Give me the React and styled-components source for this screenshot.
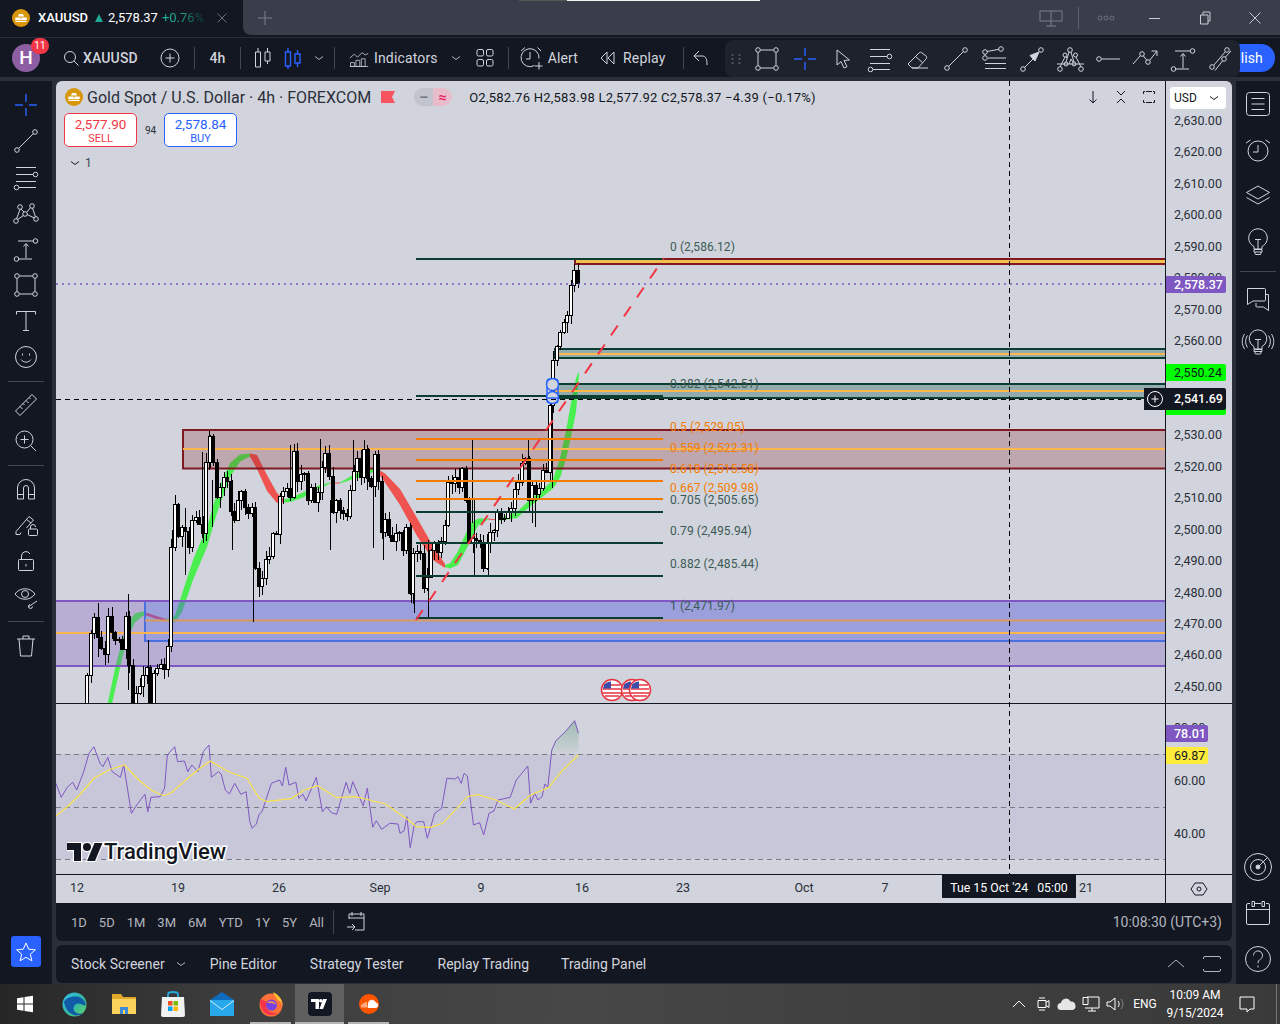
import React from 'react';
import styled, { createGlobalStyle } from 'styled-components';

const GlobalStyle = createGlobalStyle`
  html, body { margin: 0; padding: 0; background: #2a2e39; }
  body { font-family: Roboto, "Liberation Sans", sans-serif; }
  * { box-sizing: border-box; }
`;

/* ---------- chart data, all in page pixels ---------- */

const closes = [
  703, 675, 633, 617, 637, 648, 654, 616, 632, 640, 639, 649, 616, 665, 703,
  693, 686, 675, 667, 703, 673, 668, 664, 669, 646,
  547, 504, 536, 527, 531, 547, 520, 517, 524, 533,
  462, 436, 462, 497, 487, 477, 481, 511, 520, 500,
  491, 507, 513, 507, 568, 586, 578, 559, 556, 533,
  534, 496, 491, 488, 497, 451, 481, 474, 473, 500,
  487, 502, 492, 467, 453, 476, 512, 500,
  510, 513, 516, 490, 471, 458, 477, 449, 478, 486,
  454, 481, 532, 519, 535, 541, 533, 532, 550,
  527, 593, 553, 551, 553, 588, 577, 550, 543, 552,
  541, 525, 482, 483, 477, 487, 468, 500, 543, 538, 540,
  542, 568, 542, 532, 530, 511, 519, 518, 512, 508,
  489, 482, 463, 458, 500, 485, 494, 488, 470, 472,
  405, 360, 346, 332, 322, 315, 285, 270, 283,
];

const candleX = (i) => Math.round(87 + ((i - 1) * (578 - 87)) / (closes.length - 2));

const candles = closes.slice(1).map((close, idx) => {
  const i = idx + 1;
  const open = closes[idx];
  return {
    x: candleX(i),
    top: Math.min(open, close),
    bottom: Math.max(open, close),
    up: close < open,
    high: Math.min(open, close) - ((i * 37) % 9) - 1,
    low: Math.max(open, close) + ((i * 53) % 11) + 1,
  };
});

const longWicks = [
  [98, 603, 657], [128, 594, 690], [148, 640, 703], [172, 530, 600], [185, 508, 575],
  [202, 452, 538], [209, 431, 470], [212, 480, 527], [232, 480, 550], [253, 537, 622],
  [290, 445, 500], [320, 439, 500], [330, 500, 550], [353, 440, 480], [367, 445, 490],
  [373, 480, 548], [383, 520, 560], [411, 525, 603], [414, 560, 613], [428, 540, 617],
  [472, 438, 523], [474, 500, 577], [488, 540, 575], [528, 439, 480], [532, 480, 523],
  [535, 500, 527], [552, 400, 488],
];

const ribbons = [
  { color: '#49ee4f', pts: [[108, 712, 20], [116, 675, 22], [122, 650, 18], [128, 630, 14], [135, 618, 9], [142, 614, 5], [146, 614, 3]] },
  { color: '#e8535f', pts: [[146, 614, 3], [155, 617, 3], [166, 620, 2]] },
  { color: '#49ee4f', pts: [[166, 620, 2], [175, 619, 7], [182, 603, 18], [193, 570, 20], [207, 537, 20], [217, 503, 20], [230, 470, 14], [240, 458, 7], [250, 455, 3]] },
  { color: '#ef5350', pts: [[250, 455, 3], [257, 462, 14], [267, 483, 16], [277, 498, 10], [284, 501, 3]] },
  { color: '#49ee4f', pts: [[284, 501, 3], [290, 500, 4], [303, 495, 5], [317, 488, 4], [330, 483, 1]] },
  { color: '#ef5350', pts: [[330, 483, 1], [340, 483, 1]] },
  { color: '#49ee4f', pts: [[340, 483, 1], [353, 477, 4], [367, 472, 7], [376, 469, 2]] },
  { color: '#ef5350', pts: [[376, 469, 2], [385, 478, 9], [400, 497, 16], [417, 527, 18], [433, 553, 14], [445, 566, 4]] },
  { color: '#49ee4f', pts: [[445, 566, 2], [450, 566, 5], [458, 558, 14], [470, 533, 18], [478, 522, 7], [488, 519, 1]] },
  { color: '#ef5350', pts: [[488, 519, 1], [498, 520, 1]] },
  { color: '#49ee4f', pts: [[498, 520, 2], [517, 515, 6], [530, 503, 7], [543, 493, 7], [553, 484, 9], [560, 468, 20], [566, 445, 28], [571, 420, 34], [576, 395, 34], [579, 373, 3]] },
];

const ribbonShape = (pts) =>
  [...pts.map(([x, y, w]) => `${x},${y - w / 2}`), ...[...pts].reverse().map(([x, y, w]) => `${x},${y + w / 2}`)].join(' ');

const fibLines = [
  [259, '#0b3d33'], [396, '#0b3d33'], [439, '#f57c00'], [460, '#f57c00'], [481, '#f57c00'],
  [499, '#f57c00'], [512, '#0b3d33'], [543, '#0b3d33'], [576, '#0b3d33'], [618, '#0b3d33'],
];

const fibLabels = [
  ['0 (2,586.12)', 251, '#3c5a55'], ['0.382 (2,542.51)', 388, '#3c5a55'], ['0.5 (2,529.05)', 431, '#f57c00'],
  ['0.559 (2,522.31)', 452, '#f57c00'], ['0.618 (2,515.58)', 473, '#f57c00'], ['0.667 (2,509.98)', 492, '#f57c00'],
  ['0.705 (2,505.65)', 504, '#3c5a55'], ['0.79 (2,495.94)', 535, '#3c5a55'], ['0.882 (2,485.44)', 568, '#3c5a55'],
  ['1 (2,471.97)', 610, '#3c5a55'],
];

const rsiRaw = [
  [137, 250], [150, 292], [165, 262], [178, 247], [188, 270], [205, 215], [218, 160], [230, 140], [245, 190], [252, 200],
  [264, 172], [275, 215], [295, 232], [303, 195], [322, 340], [335, 315], [355, 283], [362, 335], [370, 292], [392, 290],
  [403, 265], [410, 165], [428, 140], [435, 185], [452, 183], [460, 215], [470, 195], [485, 215], [498, 155], [512, 135],
  [518, 232], [535, 215], [542, 222], [552, 270], [562, 282], [575, 250], [590, 283], [603, 275], [612, 365], [618, 385],
  [628, 372], [635, 342], [642, 335], [665, 250], [685, 240], [692, 258], [700, 202], [708, 255], [725, 247], [732, 295],
  [742, 283], [750, 303], [775, 232], [790, 335], [800, 320], [812, 338], [825, 343], [848, 247], [857, 280], [864, 245],
  [890, 318], [900, 265], [913, 382], [922, 362], [935, 388], [955, 370], [975, 372], [980, 400], [990, 392], [997, 350],
  [1005, 443], [1015, 375], [1022, 365], [1038, 365], [1047, 415], [1065, 340], [1082, 325], [1095, 235], [1115, 237], [1122, 230],
  [1130, 250], [1137, 220], [1145, 228], [1160, 375], [1175, 368], [1185, 405], [1198, 340], [1210, 333], [1220, 300], [1250, 292],
  [1265, 240], [1293, 198], [1300, 310], [1310, 280], [1318, 300], [1328, 290], [1335, 252], [1342, 262], [1352, 150], [1362, 122],
  [1385, 95], [1408, 62], [1417, 100],
];

const rsiMaRaw = [
  [137, 348], [165, 320], [195, 285], [230, 235], [270, 208], [305, 195], [340, 240], [370, 270], [400, 287], [420, 278],
  [460, 235], [490, 205], [515, 183], [560, 215], [605, 235], [635, 295], [655, 305], [715, 295], [745, 270], [778, 257],
  [825, 293], [870, 290], [895, 297], [945, 312], [1000, 360], [1020, 380], [1055, 382], [1085, 370], [1145, 290], [1170, 284],
  [1215, 300], [1260, 327], [1300, 285], [1345, 262], [1375, 215], [1417, 165],
];

const rsiPoints = (raw) => raw.map(([x, y]) => `${(x / 2.45).toFixed(1)},${(700 + y / 3).toFixed(1)}`).join(' ');

const overbought = [[1352, 150], [1362, 122], [1385, 95], [1408, 62], [1417, 100], [1417, 163], [1352, 163]];

const priceTicks = ['2,630.00', '2,620.00', '2,610.00', '2,600.00', '2,590.00', '2,580.00', '2,570.00', '2,560.00', '2,550.00', '2,540.00', '2,530.00', '2,520.00', '2,510.00', '2,500.00', '2,490.00', '2,480.00', '2,470.00', '2,460.00', '2,450.00'];

const timeLabels = [['12', 77], ['19', 178], ['26', 279], ['Sep', 380], ['9', 481], ['16', 582], ['23', 683], ['Oct', 804], ['7', 885], ['21', 1086]];

/* ---------- layout ---------- */

const Page = styled.div`
  position: relative;
  width: 1280px;
  height: 1024px;
  overflow: hidden;
  display: flex;
  flex-direction: column;
  background: #2a2e39;
  color: #d1d4dc;
`;

const TitleBar = styled.div`
  height: 38px;
  display: flex;
  background: #131722;
  border-bottom: 1px solid #2a2e39;
`;

const Tab = styled.div`
  width: 243px;
  height: 35px;
  display: flex;
  align-items: center;
  padding-left: 12px;
  font-size: 13px;
  color: #fff;
`;

const TabName = styled.span`
  font-weight: 500;
  margin-left: 8px;
`;

const TabUp = styled.span`
  width: 0;
  height: 0;
  margin: 0 5px 0 7px;
  border-left: 4.5px solid transparent;
  border-right: 4.5px solid transparent;
  border-bottom: 8px solid #22ab94;
`;

const TabChange = styled.span`
  margin-left: 4px;
  background: linear-gradient(90deg, #22ab94 40%, #10332f 100%);
  -webkit-background-clip: text;
  background-clip: text;
  color: transparent;
`;

const TabClose = styled.span`
  margin-left: 12px;
  display: flex;
`;

const WindowArea = styled.div`
  flex: 1;
  height: 35px;
  position: relative;
  display: flex;
  align-items: center;
  background: #3a3e4a;
  border-bottom-left-radius: 8px;
`;

const TopStrip = styled.div`
  position: absolute;
  left: 276px;
  top: 0;
  width: 241px;
  height: 1px;
  background: linear-gradient(90deg, #555 0 20%, #f2f2f2 20%);
`;

const WinBtn = styled.div`
  width: ${(p) => p.$w || 50}px;
  height: 35px;
  display: flex;
  align-items: center;
  justify-content: center;
  margin-left: ${(p) => p.$ml || 0}px;
  color: #c8ccd6;
`;

const WinSep = styled.div`
  width: 1px;
  height: 22px;
  margin: 0 3px;
  background: #5d606b;
`;

const Toolbar = styled.div`
  height: 39px;
  display: flex;
  align-items: center;
  padding: 0 5px 0 12px;
  background: #131722;
  font-size: 14px;
  letter-spacing: 0.15px;
  color: #d1d4dc;
`;

const Avatar = styled.div`
  position: relative;
  width: 28px;
  height: 28px;
  margin-right: 23px;
  border-radius: 50%;
  display: flex;
  align-items: center;
  justify-content: center;
  background: #8e5ea2;
  color: #fff;
  font-size: 19px;
  font-weight: 500;
`;

const AvatarBadge = styled.span`
  position: absolute;
  top: -6px;
  right: -9px;
  width: 18px;
  height: 16px;
  border-radius: 8px;
  display: flex;
  align-items: center;
  justify-content: center;
  background: #f23645;
  font-size: 10px;
  font-weight: 400;
`;

const Cell = styled.div`
  flex: none;
  display: flex;
  align-items: center;
  justify-content: ${(p) => (p.$left ? 'flex-start' : 'center')};
  gap: ${(p) => p.$gap || 0}px;
  height: 30px;
  width: ${(p) => (p.$w ? `${p.$w}px` : 'auto')};
  margin-left: ${(p) => p.$ml || 0}px;
  margin-right: ${(p) => p.$mr || 0}px;
  font-weight: ${(p) => p.$weight || 400};
`;

const BarSep = styled.div`
  flex: none;
  width: 1px;
  height: 22px;
  margin-left: ${(p) => p.$ml || 0}px;
  background: #434651;
`;

const Publish = styled.div`
  margin-left: auto;
  width: 96px;
  height: 28px;
  padding-right: 12px;
  border-radius: 14px;
  display: flex;
  align-items: center;
  justify-content: flex-end;
  background: #2962ff;
  color: #fff;
`;

const FloatingBar = styled.div`
  position: absolute;
  left: 725px;
  top: 40px;
  width: 515px;
  height: 37px;
  display: flex;
  align-items: center;
  border-radius: 8px;
  background: #1e222d;
  z-index: 5;
`;

const DragHandle = styled.div`
  width: 23px;
  display: flex;
  justify-content: center;
`;

const FloatBtn = styled.div`
  width: 38px;
  display: flex;
  justify-content: center;
`;

const Band = styled.div`
  height: 4px;
  flex: none;
`;

const Workspace = styled.div`
  height: 903px;
  flex: none;
  display: flex;
  gap: 4px;
`;

const SideBar = styled.div`
  flex: none;
  width: ${(p) => p.$w}px;
  padding-top: ${(p) => p.$pt || 0}px;
  padding-bottom: ${(p) => p.$pb || 0}px;
  display: flex;
  flex-direction: column;
  align-items: center;
  background: #131722;
`;

const SideBtn = styled.div`
  width: 100%;
  height: ${(p) => p.$h || 36}px;
  flex: none;
  display: flex;
  align-items: center;
  justify-content: center;
`;

const SideSep = styled.div`
  width: 36px;
  height: 1px;
  margin: 5.5px 0;
  flex: none;
  background: #434651;
`;

const Spacer = styled.div`
  flex: 1;
`;

const StarBtn = styled.div`
  width: 30px;
  height: 31px;
  border-radius: 3px;
  display: flex;
  align-items: center;
  justify-content: center;
  background: #2962ff;
`;

const Center = styled.div`
  width: 1176px;
  display: flex;
  flex-direction: column;
`;

const Chart = styled.div`
  height: 822px;
  display: grid;
  grid-template-columns: 1110px 66px;
  grid-template-rows: 793px 29px;
  background: #d1d4dc;
  border-radius: 6px 6px 0 0;
  overflow: hidden;
  color: #131722;
  font-size: 12.5px;
`;

const Pane = styled.div`
  position: relative;
  border-right: 1px solid #131722;
`;

const PaneSvg = styled.svg`
  display: block;
  position: absolute;
  left: 0;
  top: 0;
`;

const Legend = styled.div`
  position: absolute;
  left: 9px;
  top: 7px;
  height: 18px;
  display: flex;
  align-items: center;
  font-size: 16px;
  white-space: nowrap;
  color: #2a2e39;
`;

const LegendTitle = styled.span`
  margin-left: 4px;
`;

const LegendFlag = styled.span`
  display: flex;
  margin-left: 10px;
`;

const StatusPills = styled.span`
  display: flex;
  margin-left: 19px;
  height: 18px;
  border-radius: 9px;
  overflow: hidden;
`;

const Pill = styled.span`
  width: 19px;
  display: flex;
  align-items: center;
  justify-content: center;
  background: ${(p) => p.$bg};
  color: ${(p) => p.$color};
  font-size: 14px;
  font-weight: 700;
`;

const Ohlc = styled.span`
  margin-left: 17px;
  font-size: 13px;
  letter-spacing: 0.25px;
  color: #131722;
`;

const LegendTools = styled.div`
  position: absolute;
  top: 5px;
  right: 5px;
  display: flex;
  gap: 6px;
`;

const TradeRow = styled.div`
  position: absolute;
  left: 8px;
  top: 32px;
  display: flex;
  align-items: center;
`;

const TradeBtn = styled.div`
  width: 73px;
  height: 34px;
  display: flex;
  flex-direction: column;
  align-items: center;
  justify-content: center;
  border: 1px solid ${(p) => p.$color};
  border-radius: 5px;
  background: #fff;
  color: ${(p) => p.$color};
  font-size: 13.5px;
  line-height: 16px;
`;

const TradeCaption = styled.span`
  font-size: 11px;
  line-height: 13px;
`;

const Spread = styled.span`
  width: 27px;
  text-align: center;
  font-size: 10px;
  color: #2a2e39;
`;

const Collapse = styled.div`
  position: absolute;
  left: 13px;
  top: 75px;
  display: flex;
  align-items: center;
  gap: 4px;
  font-size: 12px;
  color: #434651;
`;

const Watermark = styled.div`
  position: absolute;
  left: 11px;
  top: 758px;
  display: flex;
  align-items: center;
  gap: 1px;
  font-size: 22px;
  font-weight: 500;
  letter-spacing: -0.05px;
  color: #131722;
  -webkit-text-stroke: 3px #fff;
  paint-order: stroke fill;
`;

const CrossPlus = styled.div`
  position: absolute;
  right: -1px;
  top: 307px;
  width: 22px;
  height: 22px;
  display: flex;
  align-items: center;
  justify-content: center;
  background: #131722;
`;

const AxisColumn = styled.div`
  position: relative;
  font-size: 12.5px;
  color: #2a2e39;
`;

const MainAxis = styled.div`
  height: 623px;
  border-bottom: 1px solid #131722;
  overflow: hidden;
`;

const RsiAxis = styled.div`
  height: 170px;
  overflow: hidden;
`;

const Ticks = styled.div`
  display: flex;
  flex-direction: column;
  padding-top: ${(p) => p.$top}px;
  gap: ${(p) => p.$gap}px;
`;

const Tick = styled.div`
  height: 20px;
  line-height: 20px;
  padding-left: 8px;
`;

const PriceBadge = styled.div`
  position: absolute;
  left: 0;
  top: ${(p) => p.$top}px;
  width: ${(p) => p.$w || 60}px;
  height: ${(p) => p.$h || 17}px;
  line-height: ${(p) => p.$h || 17}px;
  padding-left: 8px;
  border-radius: 0 2px 2px 0;
  background: ${(p) => p.$bg};
  color: ${(p) => p.$color};
  font-weight: ${(p) => p.$weight || 400};
`;

const CurrencySelect = styled.div`
  position: absolute;
  left: 4px;
  top: 6px;
  width: 56px;
  height: 22px;
  padding: 0 6px 0 4px;
  display: flex;
  align-items: center;
  justify-content: space-between;
  border-radius: 3px;
  background: #fff;
  font-size: 12px;
  color: #131722;
`;

const TimeAxis = styled.div`
  position: relative;
  border-top: 1px solid #131722;
  border-right: 1px solid #131722;
`;

const TimeLabel = styled.span`
  position: absolute;
  top: 5px;
  left: ${(p) => p.$x}px;
  transform: translateX(-50%);
  font-size: 12.5px;
  color: #2a2e39;
`;

const TimeCursor = styled.div`
  position: absolute;
  left: 886px;
  top: -1px;
  width: 134px;
  height: 24px;
  padding-top: 4px;
  display: flex;
  align-items: center;
  justify-content: center;
  gap: 9px;
  background: #131722;
  color: #fff;
  font-size: 12.3px;
`;

const AxisCorner = styled.div`
  border-top: 1px solid #131722;
  display: flex;
  justify-content: center;
  padding: 5px 0 0 0;
`;

const DateBar = styled.div`
  height: 38px;
  padding: 0 10px 0 15px;
  display: flex;
  align-items: center;
  background: #131722;
  border-radius: 0 0 6px 6px;
  font-size: 14px;
  color: #b2b5be;
`;

const Ranges = styled.div`
  display: flex;
  gap: 12px;
  font-size: 13px;
`;

const DateSep = styled.div`
  width: 1px;
  height: 24px;
  margin: 0 10px 0 9px;
  background: #434651;
`;

const Clock = styled.div`
  margin-left: auto;
`;

const BottomPanel = styled.div`
  height: 38px;
  margin-top: 4px;
  padding: 0 6px 0 15px;
  display: flex;
  align-items: center;
  background: #131722;
  border-radius: 6px;
  font-size: 14px;
  color: #d1d4dc;
`;

const PanelTab = styled.span`
  margin-right: ${(p) => p.$mr || 0}px;
  white-space: nowrap;
`;

const PanelEnd = styled.div`
  margin-left: auto;
  display: flex;
  gap: 8px;
`;

const Taskbar = styled.div`
  height: 40px;
  flex: none;
  display: flex;
  align-items: stretch;
  background: linear-gradient(90deg, #262626 0%, #3d3d3d 18%, #474747 45%, #3f3f3f 70%, #3a3a3a 100%);
`;

const TaskCell = styled.div`
  position: relative;
  width: ${(p) => p.$w || 49}px;
  flex: none;
  display: flex;
  align-items: center;
  justify-content: center;
  background: ${(p) => (p.$active ? 'rgba(255,255,255,0.17)' : 'transparent')};
  ${(p) =>
    p.$open &&
    `&::after {
      content: '';
      position: absolute;
      left: ${p.$active ? 0 : 4}px;
      right: ${p.$active ? 0 : 4}px;
      bottom: 0;
      height: 2px;
      background: #b5b5b5;
    }`}
`;

const Tray = styled.div`
  margin-left: auto;
  display: flex;
  align-items: stretch;
  color: #fff;
  font-size: 12px;
`;

const TrayCell = styled.div`
  width: ${(p) => p.$w || 24}px;
  display: flex;
  flex-direction: column;
  align-items: center;
  justify-content: center;
  line-height: 18px;
`;

const DesktopEdge = styled.div`
  width: 4px;
  border-left: 1px solid #777;
  margin-left: 9px;
`;

/* ---------- icons ---------- */

const Ico = styled.svg`
  display: block;
  flex: none;
  fill: none;
  stroke: ${(p) => p.$c || '#d1d4dc'};
  stroke-width: ${(p) => p.$sw || 1};
`;

const Icon = ({ size = 28, box = 28, c, sw, children }) => (
  <Ico width={size} height={size} viewBox={`0 0 ${box} ${box}`} $c={c} $sw={sw}>
    {children}
  </Ico>
);

const Dot = ({ x, y, r = 2.3 }) => <circle cx={x} cy={y} r={r} />;

const Chevron = ({ c = '#b2b5be' }) => (
  <Icon size={12} box={12} c={c}>
    <path d="M2 4.5l4 3 4-3" />
  </Icon>
);

const Cross = () => (
  <Icon c="#2962ff" sw={1.4}>
    <path d="M14 3v8M14 17v8M3 14h8M17 14h8" />
  </Icon>
);
const TrendLine = () => (
  <Icon>
    <Dot x={5} y={23} />
    <Dot x={23} y={5} />
    <path d="M6.7 21.3L21.3 6.7" />
  </Icon>
);
const ChannelLines = () => (
  <Icon>
    <path d="M4 4.5h20M4 11.5h17M7 24.5h17M4 18.5h20" />
    <Dot x={23.5} y={11.5} />
    <Dot x={4.5} y={24.5} />
  </Icon>
);
const Xabcd = () => (
  <Icon>
    <Dot x={8} y={8} />
    <Dot x={20} y={7} />
    <Dot x={13} y={15} />
    <Dot x={4} y={22} />
    <Dot x={24} y={20} />
    <path d="M9 10l3 3M15 13l3.5-4.5M20.5 9l3 9M11.5 16.5L5.5 20.5M15 15.5l7.5 3.5M8 10.5L4.5 20" />
  </Icon>
);
const Measure = () => (
  <Icon>
    <path d="M6 6h15M6 24h14M14 23V9M11.5 11.5L14 8.5l2.5 3" />
    <Dot x={23.5} y={6} />
    <Dot x={4.5} y={24} />
  </Icon>
);
const RectTool = () => (
  <Icon>
    <Dot x={5} y={5} />
    <Dot x={23} y={5} />
    <Dot x={5} y={23} />
    <Dot x={23} y={23} />
    <path d="M7.5 5h13M7.5 23h13M5 7.5v13M23 7.5v13" />
  </Icon>
);
const TextTool = () => (
  <Icon>
    <path d="M4.5 4.5h19M14 4.5v19M11 23.5h6M4.5 4.5v3M23.5 4.5v3" />
  </Icon>
);
const Smile = () => (
  <Icon>
    <circle cx={14} cy={14} r={10.5} />
    <path d="M9 16.5c2.5 3.5 7.5 3.5 10 0M10.5 10.5v2M17.5 10.5v2" />
  </Icon>
);
const Ruler = () => (
  <Icon>
    <path d="M3.5 20L20 3.5 24.5 8 8 24.5zM8 15.5l2.5 2.5M11 12.5l1.5 1.5M14 9.5l2.5 2.5M17 6.5l1.5 1.5" />
  </Icon>
);
const ZoomIn = () => (
  <Icon>
    <circle cx={12.5} cy={12.5} r={8.5} />
    <path d="M18.5 18.5l5.5 5.5M12.5 8.5v8M8.5 12.5h8" />
  </Icon>
);
const Magnet = () => (
  <Icon>
    <path d="M5.5 24V13a8.5 8.5 0 0 1 17 0v11h-6V13a2.5 2.5 0 0 0-5 0v11zM5.5 19.5h6M16.5 19.5h6" />
  </Icon>
);
const PencilLock = () => (
  <Icon>
    <path d="M4 20.5L17 5.5l4.5 3.5-7 8M9 21.5l-1 2H4v-3M14.5 8.5l4.5 3.5" />
    <rect x={16.5} y={18} width={9} height={6.5} rx={1} />
    <path d="M18.5 18v-2a2.5 2.5 0 0 1 5 0" />
  </Icon>
);
const Unlock = () => (
  <Icon>
    <rect x={6.5} y={12.5} width={15} height={11} rx={1} />
    <path d="M9.5 12.5V9a4.5 4.5 0 0 1 8.5-2M14 17v2.5" />
  </Icon>
);
const EyeTool = () => (
  <Icon>
    <path d="M3 11c5-7 15-7 20 0-5 7-15 7-20 0z" />
    <circle cx={13} cy={11} r={3.5} />
    <path d="M16 24l9-6M18 21.5a2 2 0 1 0 2.5 2" />
  </Icon>
);
const Trash = () => (
  <Icon>
    <path d="M5 8h18M11 8V5h6v3M7 8l1.5 17h11L21 8" />
  </Icon>
);
const Star = () => (
  <Icon size={24} box={24} c="#fff">
    <path d="M12 3l2.7 6.2 6.7.6-5.1 4.4 1.6 6.6L12 17.3l-5.900 3.500 1.600-6.600-5.100-4.400 6.700-.6z" />
  </Icon>
);
const Cursor = () => (
  <Icon>
    <path d="M8 5v15l4-3.5 3 6.5 3-1.300-3-6.200 5.500-.5z" />
  </Icon>
);
const Eraser = () => (
  <Icon>
    <path d="M4 19l11-11c1-1 2-1 3 0l4 3c1 1 1 2 0 3L14 23H8zM11.5 11.5l7 6M8 23h16" />
  </Icon>
);
const FibFan = () => (
  <Icon>
    <Dot x={5} y={7} />
    <Dot x={5} y={13} />
    <Dot x={21} y={4} />
    <path d="M7 6.5l12-2.2M8 13h18M5 18.5h21M5 23.5h21M5 9.5v1" />
  </Icon>
);
const ArrowTool = () => (
  <Icon>
    <Dot x={5} y={24} />
    <Dot x={23} y={5} />
    <path d="M6.5 22.5L17 12" />
    <path d="M21 7l-9 3.5 5 5.5z" fill="#d1d4dc" />
  </Icon>
);
const Pitchfork = () => (
  <Icon>
    <Dot x={4} y={24} />
    <Dot x={25} y={24} />
    <Dot x={14} y={5} />
    <Dot x={9} y={10} r={2} />
    <Dot x={19.5} y={10} r={2} />
    <Dot x={10} y={19} r={2} />
    <Dot x={18} y={19} r={2} />
    <path d="M1 19h27M4 22l5-10M25 22l-5-10M13 7l-3 10M15 7l3 10M11 12l-1 1M13 19l2-5 2 3" />
  </Icon>
);
const HLine = () => (
  <Icon>
    <Dot x={5} y={14} />
    <path d="M7.5 14H26" />
  </Icon>
);
const PolyArrow = () => (
  <Icon>
    <Dot x={11} y={9} />
    <Dot x={17} y={17} />
    <path d="M2 19l7.5-8.5M12.5 11l3.5 4.5M18.5 15.5L26 6M20.5 6H26v5" />
  </Icon>
);
const Parallel = () => (
  <Icon>
    <Dot x={5} y={22} />
    <Dot x={20} y={5} />
    <Dot x={17} y={14} />
    <path d="M6.7 20.3L18.3 6.7M8 25.5l7.5-9.5M18.5 12l5.5-6" />
  </Icon>
);
const MenuList = () => (
  <Icon>
    <rect x={2.5} y={2.5} width={23} height={23} rx={3} />
    <path d="M7.5 8.5h13M7.5 14h13M7.5 19.5h13" />
  </Icon>
);
const AlarmClock = () => (
  <Icon>
    <circle cx={14} cy={15} r={10} />
    <path d="M14 9v7h-5M2 7l4.5-3M26 7l-4.5-3" />
  </Icon>
);
const Layers = () => (
  <Icon>
    <path d="M14 4l11.5 6.5L14 17 2.5 10.5zM2.5 15.5L14 22l11.5-6.500" />
  </Icon>
);
const Bulb = () => (
  <Icon>
    <path d="M10 21v-2.5a9.3 9.3 0 1 1 8 0V21zM10 21.5h8V24h-8zM11 24v1.500a1 1 0 0 0 1 1h4a1 1 0 0 0 1-1V24M11 11.5h6M14 11.5V21" />
  </Icon>
);
const Chat = () => (
  <Icon>
    <path d="M3.5 3.5h17a1 1 0 0 1 1 1V15a1 1 0 0 1-1 1H9l-5.500 3.500zM21.500 9.500h3v16l-5-3.500h-7a1 1 0 0 1-.5-1V18" />
  </Icon>
);
const BulbWaves = () => (
  <Icon size={34} box={34}>
    <path d="M13 23v-2.500a8.800 8.800 0 1 1 8 0V23zM13 23.500h8v2h-8zM14 25.500V27a1 1 0 0 0 1 1h4a1 1 0 0 0 1-1v-1.500M14 13.500h6M17 13.500V23M6.500 9.500c-2.500 4-2.500 8 0 12M3.500 8c-3 5-3 10 0 15M27.500 9.500c2.500 4 2.500 8 0 12M30.500 8c3 5 3 10 0 15" />
  </Icon>
);
const Radar = () => (
  <Icon>
    <circle cx={14} cy={14} r={13.5} />
    <circle cx={14} cy={14} r={7.5} />
    <circle cx={14} cy={14} r={2} fill="#d1d4dc" />
    <path d="M14 14L23.5 4.5" />
  </Icon>
);
const Calendar = () => (
  <Icon>
    <path d="M6 4.5H4A1.500 1.500 0 0 0 2.500 6v18A1.500 1.500 0 0 0 4 25.500h20a1.500 1.500 0 0 0 1.500-1.500V6A1.500 1.500 0 0 0 24 4.500h-2M11 4.500h6M2.500 10.500h23M8 2.500h2.500v5H8zM18 2.500h2.500v5H18z" />
  </Icon>
);
const Help = () => (
  <Icon>
    <circle cx={14} cy={14} r={12.5} />
    <path d="M9.5 10.5a4.500 4.500 0 1 1 7 3.700c-1.500 1-2.500 1.800-2.500 4M14 20.500v2" />
  </Icon>
);

const GoldIcon = ({ size = 18 }) => (
  <svg width={size} height={size} viewBox="0 0 18 18">
    <circle cx={9} cy={9} r={9} fill="#d8960a" />
    <path d="M7 5h4l1 2.5H6zM3.5 8.5h5l.5 2.5H3zM9.5 8.5h5l.5 2.5H9zM3.5 11.8h11V13h-11z" fill="#fff" />
  </svg>
);

const TvMark = () => (
  <svg width={36} height={20} viewBox="0 0 36 18">
    <g fill="#131722" stroke="#fff" strokeWidth={2.4} paintOrder="stroke fill">
      <path d="M14 18H7V7H0V0h14z" />
      <circle cx={20} cy={4} r={4} />
      <path d="M28 18h-8L27.5 0h8z" />
    </g>
  </svg>
);

/* ---------- chart drawing ---------- */

const FlagBall = ({ x, y }) => (
  <g>
    <circle cx={x} cy={y} r={10.5} fill="#fff" stroke="#e5343f" strokeWidth={1.5} />
    <path d={`M${x - 8} ${y - 5}h16M${x - 9} ${y - 1}h18M${x - 9} ${y + 3}h18M${x - 7} ${y + 6}h14`} stroke="#e5343f" strokeWidth={1.5} />
    <path d={`M${x - 8} ${y - 5}a9 9 0 0 1 7-3.5v7h-8z`} fill="#3b4da8" />
  </g>
);

const ChartDrawing = () => (
  <PaneSvg width={1109} height={793} viewBox="56 81 1109 793">
    <defs>
      <clipPath id="mainClip">
        <rect x={56} y={81} width={1109} height={622} />
      </clipPath>
      <linearGradient id="overFill" x1="0" y1="0" x2="0" y2="1">
        <stop offset="0" stopColor="#5f9e7a" stopOpacity="0.45" />
        <stop offset="1" stopColor="#5f9e7a" stopOpacity="0.03" />
      </linearGradient>
    </defs>

    <g clipPath="url(#mainClip)">
      {ribbons.map((r, i) => (
        <polygon key={i} points={ribbonShape(r.pts)} fill={r.color} />
      ))}

      {/* supply and demand zones */}
      <rect x={183} y={430} width={990} height={38.5} fill="rgba(128,25,34,0.24)" stroke="#801922" strokeWidth={2} />
      <line x1={183} y1={449} x2={1165} y2={449} stroke="#ffb74d" strokeWidth={2} />

      <rect x={56} y={601} width={1109} height={65} fill="rgba(126,87,194,0.3)" />
      <rect x={145} y={601} width={1030} height={40} fill="rgba(41,98,255,0.2)" stroke="#4c6fe0" strokeWidth={2} />
      <path d="M56 601h1109M56 666h1109" stroke="#7e57c2" strokeWidth={2} />
      <path d="M145 620.5h1020" stroke="#d99a5f" strokeWidth={2} />
      <path d="M56 633h1109" stroke="#ffb74d" strokeWidth={2} />

      <rect x={575} y={259} width={600} height={5} fill="#f2c14d" stroke="#801922" strokeWidth={2} />
      <rect x={555} y={349} width={620} height={9} fill="rgba(0,77,64,0.3)" stroke="#0b3d33" strokeWidth={2} />
      <path d="M556 354h609" stroke="#ffb74d" strokeWidth={2} />
      <rect x={553} y={384} width={620} height={14} fill="rgba(0,77,64,0.3)" stroke="#0b3d33" strokeWidth={2} />
      <path d="M554 391h611" stroke="#ffb74d" strokeWidth={2} />

      <g shapeRendering="crispEdges" stroke="#000" strokeWidth={1}>
        {longWicks.map(([x, a, b], i) => (
          <line key={i} x1={x + 0.5} y1={a} x2={x + 0.5} y2={b} />
        ))}
        {candles.map((c, i) => (
          <g key={i}>
            <line x1={c.x + 0.5} y1={c.high} x2={c.x + 0.5} y2={c.low} />
            <rect x={c.x - 1.5} y={c.top} width={3} height={Math.max(c.bottom - c.top, 1)} fill={c.up ? '#fff' : '#000'} />
          </g>
        ))}
      </g>

      {/* fib retracement */}
      {fibLines.map(([y, color]) => (
        <line key={y} x1={416} y1={y} x2={663} y2={y} stroke={color} strokeWidth={2} />
      ))}
      <line x1={416} y1={620} x2={664} y2={258} stroke="#f23645" strokeWidth={2} strokeDasharray="12 11" />
      <g fontFamily="Roboto, sans-serif" fontSize="12" letterSpacing="0.08">
        {fibLabels.map(([text, y, color]) => (
          <text key={text} x={670} y={y} fill={color}>{text}</text>
        ))}
      </g>

      <g fill="#d1d4dc" stroke="#2962ff" strokeWidth={1.5}>
        <rect x={547} y={379} width={11} height={24} rx={3} fill="none" />
        <circle cx={552.5} cy={384.5} r={6} />
        <circle cx={552.5} cy={397.5} r={6} />
      </g>
      <path d="M547 398h11" stroke="#2962ff" strokeWidth={1.5} />

      <FlagBall x={612} y={690} />
      <FlagBall x={632} y={690} />
      <FlagBall x={640} y={690} />
    </g>

    {/* price and crosshair lines */}
    <path d="M56 284h1109" stroke="#7e57c2" strokeWidth={1.5} strokeDasharray="2 4" />
    <path d="M56 399.5h1089" stroke="#000" strokeWidth={1} strokeDasharray="5 4" />

    <path d="M56 703.5h1109" stroke="#131722" strokeWidth={1} />

    {/* rsi pane */}
    <rect x={56} y={754} width={1109} height={105} fill="rgba(126,87,194,0.1)" />
    <path d="M56 754.5h1109M56 807.5h1109M56 859.5h1109" stroke="#787b86" strokeWidth={1} strokeDasharray="5 4" />
    <polygon points={rsiPoints(overbought)} fill="url(#overFill)" />
    <polyline points={rsiPoints(rsiRaw)} fill="none" stroke="#7e57c2" strokeWidth={1} />
    <polyline points={rsiPoints(rsiMaRaw)} fill="none" stroke="#fbe34a" strokeWidth={1.2} />

    <path d="M1009.5 81v793" stroke="#000" strokeWidth={1} strokeDasharray="5 4" />
  </PaneSvg>
);

/* ---------- taskbar art ---------- */

const WinLogo = () => (
  <svg width={18} height={18} viewBox="0 0 18 18">
    <path d="M1 3.2l6.5-1v6.3H1zM8.5 2L17 .7v7.8H8.5zM1 9.5h6.5v6.3l-6.5-1zM8.5 9.5H17v7.800L8.500 16z" fill="#fff" />
  </svg>
);

const EdgeLogo = () => (
  <svg width={25} height={25} viewBox="0 0 25 25">
    <defs>
      <linearGradient id="edgeA" x1="0" y1="0" x2="1" y2="1">
        <stop offset="0" stopColor="#35c1f1" />
        <stop offset="0.5" stopColor="#2fb6a6" />
        <stop offset="1" stopColor="#66d46a" />
      </linearGradient>
    </defs>
    <circle cx={12.5} cy={12.5} r={12} fill="url(#edgeA)" />
    <path d="M2 10c2 10 9 15 16 13 1-.3 3-1.5 3-2-5 2-9-1-9.5-4-.4-3 2-5.5 5-5.5 3.5 0 5 2.5 7 2 1-3-3-9-10-9C7 4.500 3 7 2 10z" fill="#105aa8" />
  </svg>
);

const FolderLogo = () => (
  <svg width={24} height={22} viewBox="0 0 24 22">
    <path d="M0 1h9l2 3h13v16H0z" fill="#e0a92a" />
    <path d="M0 6h24v15H0z" fill="#fbd35c" />
    <path d="M8 14h8v7h-3v-4h-2v4H8z" fill="#3c8ad6" />
  </svg>
);

const StoreLogo = () => (
  <svg width={24} height={26} viewBox="0 0 24 26">
    <path d="M7 7V3.5C7 1 9 1 12 1s5 0 5 2.5V7" fill="none" stroke="#2aa8e0" strokeWidth={1.8} />
    <path d="M1 6h22l1 18a2 2 0 0 1-2 2H2a2 2 0 0 1-2-2z" fill="#f1f1f1" />
    <path d="M7 10h4.5v4.5H7z" fill="#f25022" />
    <path d="M12.5 10H17v4.5h-4.5z" fill="#7fba00" />
    <path d="M7 15.5h4.5V20H7z" fill="#00a4ef" />
    <path d="M12.5 15.5H17V20h-4.5z" fill="#ffb900" />
  </svg>
);

const MailLogo = () => (
  <svg width={24} height={24} viewBox="0 0 24 24">
    <path d="M0 8L12 0l12 8v16H0z" fill="#0f6cbd" />
    <path d="M0 8h24v16H0z" fill="#28a8ea" />
    <path d="M0 8l12 9 12-9v1L12 18 0 9z" fill="#d6f0fb" />
  </svg>
);

const FirefoxLogo = () => (
  <svg width={24} height={26} viewBox="0 0 24 26">
    <circle cx={12} cy={14} r={11.5} fill="#ff7139" />
    <path d="M14 1c6 3 10 8 9.5 14-1-4-3-5-5-6-1-3-4-5-4.5-8z" fill="#ffbd2e" />
    <path d="M1 8c0 6 1 10 5 14 3 2.5 9 3 13 0-4 1-8 0-11-4-2-3 0-5 2-6-4-2-7-3-9-4z" fill="#f5344b" />
    <circle cx={12.5} cy={14} r={5.5} fill="#7542e5" />
    <path d="M8 12c3-3 8-2 9.5 2-3-2-5-2-9.5-2z" fill="#ff9640" />
  </svg>
);

const TvTile = () => (
  <svg width={24} height={24} viewBox="0 0 24 24">
    <rect width={24} height={24} rx={4} fill="#131722" />
    <path d="M3 7h8v10H7.5V10H3zM15 17h-3.5L15 7h4z" fill="#fff" />
    <circle cx={12.8} cy={8.8} r={1.8} fill="#fff" />
  </svg>
);

const CloudTile = () => (
  <svg width={20} height={20} viewBox="0 0 20 20">
    <circle cx={10} cy={10} r={10} fill="#ff5500" />
    <path d="M3 13.5v-3M5 13.5V9M7 13.5V8M9 13.5h7.5a2 2 0 0 0 0-4.500c-.5-3-4.500-3.500-6.500-1.500z" stroke="#fff" strokeWidth={1} fill="#fff" />
  </svg>
);

const TrayIcon = ({ children }) => (
  <Ico width={20} height={20} viewBox="0 0 20 20" $c="#fff">
    {children}
  </Ico>
);

/* ---------- page ---------- */

const App = () => (
  <Page>
    <GlobalStyle />

    <TitleBar>
      <Tab>
        <GoldIcon />
        <TabName>XAUUSD</TabName>
        <TabUp />
        <span>2,578.37</span>
        <TabChange>+0.76%</TabChange>
        <TabClose>
          <Icon size={12} box={12} c="#6a6d78"><path d="M1.5 1.5l9 9M10.5 1.5l-9 9" /></Icon>
        </TabClose>
      </Tab>
      <WindowArea>
        <TopStrip />
        <WinBtn $w={44}>
          <Icon size={16} box={16} c="#7d808b"><path d="M8 1v14M1 8h14" /></Icon>
        </WinBtn>
        <WinBtn $w={24} $ml={752}>
          <Icon size={24} box={24} c="#7d808b"><path d="M1 5h22v10H1zM12 5v15M7 20h10" /></Icon>
        </WinBtn>
        <WinBtn $w={12} />
        <WinSep />
        <WinBtn $w={48}>
          <Icon size={20} box={20} c="#6f727d">
            <circle cx={4} cy={10} r={2} />
            <circle cx={10} cy={10} r={2} />
            <circle cx={16} cy={10} r={2} />
          </Icon>
        </WinBtn>
        <WinBtn>
          <Icon size={12} box={12} c="#c8ccd6"><path d="M0 6.5h11" /></Icon>
        </WinBtn>
        <WinBtn>
          <Icon size={14} box={14} c="#c8ccd6"><path d="M2.5 4H10v9H2.5zM5 4V1h7v9h-2" /></Icon>
        </WinBtn>
        <WinBtn>
          <Icon size={14} box={14} c="#c8ccd6"><path d="M1.5 1.5l11 11M12.5 1.5l-11 11" /></Icon>
        </WinBtn>
      </WindowArea>
    </TitleBar>

    <Toolbar>
      <Avatar>
        H
        <AvatarBadge>11</AvatarBadge>
      </Avatar>
      <Cell $w={92} $left $gap={4} $weight={500}>
        <Icon size={16} box={16}><circle cx={7} cy={7} r={5.5} /><path d="M11 11l4.5 4.5" /></Icon>
        XAUUSD
      </Cell>
      <Cell $w={30}>
        <Icon size={20} box={20}><circle cx={10} cy={10} r={9} /><path d="M10 5.5v9M5.5 10h9" /></Icon>
      </Cell>
      <BarSep $ml={9} />
      <Cell $w={45} $weight={500}>4h</Cell>
      <BarSep />
      <Cell $w={36} $ml={3}>
        <Icon size={22} box={22}><path d="M4.5 5h5v15h-5zM7 5V1M14 5h5v9h-5zM16.5 5V1M16.5 14v3" /></Icon>
      </Cell>
      <Cell $w={24}>
        <Icon size={22} box={22} c="#2962ff" sw={1.4}><path d="M4.5 5h5v14h-5zM7 5V1M7 19v3M14 7h5v9h-5zM16.5 7V3M16.5 16v4" /></Icon>
      </Cell>
      <Cell $w={30}><Chevron /></Cell>
      <BarSep />
      <Cell $ml={14} $gap={5}>
        <Icon size={20} box={26}><path d="M1 13l6-5 4 4 6-6 4 3 4-2M2 24v-5h5v5zM9 24v-8h5v8zM16 24V14h5v10zM1 24h24" /></Icon>
        Indicators
      </Cell>
      <Cell $w={24} $ml={6}><Chevron /></Cell>
      <Cell $w={34}>
        <Icon size={20} box={20}>
          <rect x={2} y={1.5} width={6.5} height={6.5} rx={1.5} />
          <rect x={11.5} y={1.5} width={6.5} height={6.5} rx={1.5} />
          <rect x={2} y={11.5} width={6.5} height={6.5} rx={1.5} />
          <rect x={11.5} y={11.5} width={6.5} height={6.5} rx={1.5} />
        </Icon>
      </Cell>
      <BarSep $ml={6} />
      <Cell $ml={11} $gap={4}>
        <Icon size={24} box={24}><path d="M14.5 19.5a9 9 0 1 1 4.5-7M10 6v7H6M1 5l4-3.5M21 5l-3.5-3.5M19 16v7.5M15 20h7.5" /></Icon>
        Alert
      </Cell>
      <Cell $ml={20} $gap={5}>
        <Icon size={20} box={20}><path d="M9 4L3 10l6 6zM16 4l-6 6 6 6z" /></Icon>
        Replay
      </Cell>
      <BarSep $ml={18} />
      <Cell $w={28} $ml={3}>
        <Icon size={20} box={20}><path d="M8 3L3 8l5 5M3 8h8c4 0 5 3 5 9" /></Icon>
      </Cell>
      <Publish>lish</Publish>
    </Toolbar>

    <FloatingBar>
      <DragHandle>
        <Icon size={12} box={12} c="#50535e" sw={2}>
          <path d="M2.5 1v2M2.5 5v2M2.5 9v2M9.5 1v2M9.5 5v2M9.5 9v2" />
        </Icon>
      </DragHandle>
      <FloatBtn><RectTool /></FloatBtn>
      <FloatBtn><Cross /></FloatBtn>
      <FloatBtn><Cursor /></FloatBtn>
      <FloatBtn><ChannelLines /></FloatBtn>
      <FloatBtn><Eraser /></FloatBtn>
      <FloatBtn><TrendLine /></FloatBtn>
      <FloatBtn><FibFan /></FloatBtn>
      <FloatBtn><ArrowTool /></FloatBtn>
      <FloatBtn><Pitchfork /></FloatBtn>
      <FloatBtn><HLine /></FloatBtn>
      <FloatBtn><PolyArrow /></FloatBtn>
      <FloatBtn><Measure /></FloatBtn>
      <FloatBtn><Parallel /></FloatBtn>
    </FloatingBar>

    <Band />

    <Workspace>
      <SideBar $w={52} $pt={6} $pb={17}>
        <SideBtn><Cross /></SideBtn>
        <SideBtn><TrendLine /></SideBtn>
        <SideBtn><ChannelLines /></SideBtn>
        <SideBtn><Xabcd /></SideBtn>
        <SideBtn><Measure /></SideBtn>
        <SideBtn><RectTool /></SideBtn>
        <SideBtn><TextTool /></SideBtn>
        <SideBtn><Smile /></SideBtn>
        <SideSep />
        <SideBtn><Ruler /></SideBtn>
        <SideBtn><ZoomIn /></SideBtn>
        <SideSep />
        <SideBtn><Magnet /></SideBtn>
        <SideBtn><PencilLock /></SideBtn>
        <SideBtn><Unlock /></SideBtn>
        <SideBtn><EyeTool /></SideBtn>
        <SideSep />
        <SideBtn><Trash /></SideBtn>
        <Spacer />
        <StarBtn><Star /></StarBtn>
      </SideBar>

      <Center>
        <Chart>
          <Pane>
            <ChartDrawing />
            <Legend>
              <GoldIcon />
              <LegendTitle>Gold Spot / U.S. Dollar · 4h · FOREXCOM</LegendTitle>
              <LegendFlag>
                <svg width={14} height={12} viewBox="0 0 14 12"><path d="M0 0h14l-3 6 3 6H0z" fill="#f7525f" /></svg>
              </LegendFlag>
              <StatusPills>
                <Pill $bg="#c1c4cd" $color="#787b86">–</Pill>
                <Pill $bg="#e8bccb" $color="#e91e63">≈</Pill>
              </StatusPills>
              <Ohlc>O2,582.76 H2,583.98 L2,577.92 C2,578.37 −4.39 (−0.17%)</Ohlc>
            </Legend>
            <LegendTools>
              <Icon size={22} box={22} c="#131722"><path d="M11 5v12M7.5 13.5L11 17l3.5-3.5" /></Icon>
              <Icon size={22} box={22} c="#131722"><path d="M7 5l4 4 4-4M7 17l4-4 4 4" /></Icon>
              <Icon size={22} box={22} c="#131722"><path d="M7 5.5H5.5V8M15 5.5h1.5V8M7 16.5H5.5V14M15 16.5h1.5V14M8 5.5h6M8 16.5h6" /></Icon>
            </LegendTools>
            <TradeRow>
              <TradeBtn $color="#f23645">
                2,577.90
                <TradeCaption>SELL</TradeCaption>
              </TradeBtn>
              <Spread>94</Spread>
              <TradeBtn $color="#2962ff">
                2,578.84
                <TradeCaption>BUY</TradeCaption>
              </TradeBtn>
            </TradeRow>
            <Collapse>
              <Chevron c="#131722" />
              1
            </Collapse>
            <Watermark>
              <TvMark />
              TradingView
            </Watermark>
            <CrossPlus>
              <Icon size={18} box={18} c="#fff"><circle cx={9} cy={9} r={7.5} /><path d="M9 5.5v7M5.5 9h7" /></Icon>
            </CrossPlus>
          </Pane>

          <AxisColumn>
            <MainAxis>
              <Ticks $top={30} $gap={11.44}>
                {priceTicks.map((t) => <Tick key={t}>{t}</Tick>)}
              </Ticks>
            </MainAxis>
            <RsiAxis>
              <Ticks $top={14} $gap={33}>
                <Tick>80.00</Tick>
                <Tick>60.00</Tick>
                <Tick>40.00</Tick>
              </Ticks>
            </RsiAxis>
            <CurrencySelect>
              USD
              <Chevron c="#131722" />
            </CurrencySelect>
            <PriceBadge $top={195} $bg="#7e57c2" $color="#fff" $weight={500}>2,578.37</PriceBadge>
            <PriceBadge $top={283} $bg="#00ff00" $color="#131722">2,550.24</PriceBadge>
            <PriceBadge $top={317} $bg="#00ff00" $color="#131722" />
            <PriceBadge $top={307} $h={22} $bg="#131722" $color="#fff" $weight={500}>2,541.69</PriceBadge>
            <PriceBadge $top={644} $w={42} $bg="#7e57c2" $color="#fff" $weight={500}>78.01</PriceBadge>
            <PriceBadge $top={666} $w={42} $bg="#ffeb3b" $color="#131722">69.87</PriceBadge>
          </AxisColumn>

          <TimeAxis>
            {timeLabels.map(([t, x]) => <TimeLabel key={t} $x={x - 56}>{t}</TimeLabel>)}
            <TimeCursor>
              <span>Tue 15 Oct '24</span>
              <span>05:00</span>
            </TimeCursor>
          </TimeAxis>
          <AxisCorner>
            <Icon size={18} box={18} c="#131722"><path d="M5 3h8l4 6-4 6H5L1 9z" /><circle cx={9} cy={9} r={2} /></Icon>
          </AxisCorner>
        </Chart>

        <DateBar>
          <Ranges>
            {['1D', '5D', '1M', '3M', '6M', 'YTD', '1Y', '5Y', 'All'].map((r) => <span key={r}>{r}</span>)}
          </Ranges>
          <DateSep />
          <Icon size={24} box={24}><path d="M5 9V4h15v16H11M5 8h15M8 2v4M17 2v4M3 17h8M8 14l3 3-3 3" /></Icon>
          <Clock>10:08:30 (UTC+3)</Clock>
        </DateBar>

        <BottomPanel>
          <PanelTab $mr={10}>Stock Screener</PanelTab>
          <Cell $w={12} $mr={23}><Chevron /></Cell>
          <PanelTab $mr={33}>Pine Editor</PanelTab>
          <PanelTab $mr={34}>Strategy Tester</PanelTab>
          <PanelTab $mr={32}>Replay Trading</PanelTab>
          <PanelTab>Trading Panel</PanelTab>
          <PanelEnd>
            <Icon size={28} box={28} c="#b2b5be"><path d="M6 17l8-7 8 7" /></Icon>
            <Icon size={28} box={28} c="#b2b5be"><path d="M8 6.5H7A1.5 1.5 0 0 0 5.5 8v1M20 6.5h1A1.5 1.5 0 0 1 22.5 8v1M8 21.5H7A1.5 1.5 0 0 1 5.5 20v-1M20 21.5h1a1.5 1.5 0 0 0 1.5-1.5v-1M8 6.5h12M8 21.5h12" /></Icon>
          </PanelEnd>
        </BottomPanel>
      </Center>

      <SideBar $w={44} $pb={2}>
        <SideBtn $h={46}><MenuList /></SideBtn>
        <SideBtn $h={46}><AlarmClock /></SideBtn>
        <SideBtn $h={46}><Layers /></SideBtn>
        <SideBtn $h={46}><Bulb /></SideBtn>
        <SideSep />
        <SideBtn $h={44}><Chat /></SideBtn>
        <SideBtn $h={44}><BulbWaves /></SideBtn>
        <Spacer />
        <SideBtn $h={46}><Radar /></SideBtn>
        <SideBtn $h={46}><Calendar /></SideBtn>
        <SideBtn $h={46}><Help /></SideBtn>
      </SideBar>
    </Workspace>

    <Spacer />

    <Taskbar>
      <TaskCell $w={50}><WinLogo /></TaskCell>
      <TaskCell><EdgeLogo /></TaskCell>
      <TaskCell><FolderLogo /></TaskCell>
      <TaskCell><StoreLogo /></TaskCell>
      <TaskCell><MailLogo /></TaskCell>
      <TaskCell $open><FirefoxLogo /></TaskCell>
      <TaskCell $open $active><TvTile /></TaskCell>
      <TaskCell $open><CloudTile /></TaskCell>
      <Tray>
        <TrayCell>
          <TrayIcon><path d="M4 13l6-6 6 6" /></TrayIcon>
        </TrayCell>
        <TrayCell>
          <TrayIcon><path d="M6 4h6M6 16h6M5 6.5h8v7H5zM13 8.5l3-2v7l-3-2" /></TrayIcon>
        </TrayCell>
        <TrayCell>
          <svg width={20} height={20} viewBox="0 0 20 20"><path d="M4 16a3.5 3.5 0 0 1 0-7 5 5 0 0 1 9.5-1.5A4.5 4.5 0 0 1 16 16z" fill="#e6e6e6" /></svg>
        </TrayCell>
        <TrayCell>
          <TrayIcon><path d="M6 3h12v11H4M2 3.5h5v7H2zM11 14v3M7 17h8" /></TrayIcon>
        </TrayCell>
        <TrayCell>
          <TrayIcon><path d="M2 8h3l5-4v12l-5-4H2zM13 7c1.5 2 1.5 4 0 6" /><path d="M16 5c2.5 3 2.5 7 0 10" stroke="#8a8a8a" /></TrayIcon>
        </TrayCell>
        <TrayCell $w={36}>ENG</TrayCell>
        <TrayCell $w={64}>
          <span>10:09 AM</span>
          <span>9/15/2024</span>
        </TrayCell>
        <TrayCell $w={40}>
          <Icon size={20} box={20} c="#fff"><path d="M3 3h14v12h-4l-3 3v-3H3z" /></Icon>
        </TrayCell>
        <DesktopEdge />
      </Tray>
    </Taskbar>
  </Page>
);

export default App;
